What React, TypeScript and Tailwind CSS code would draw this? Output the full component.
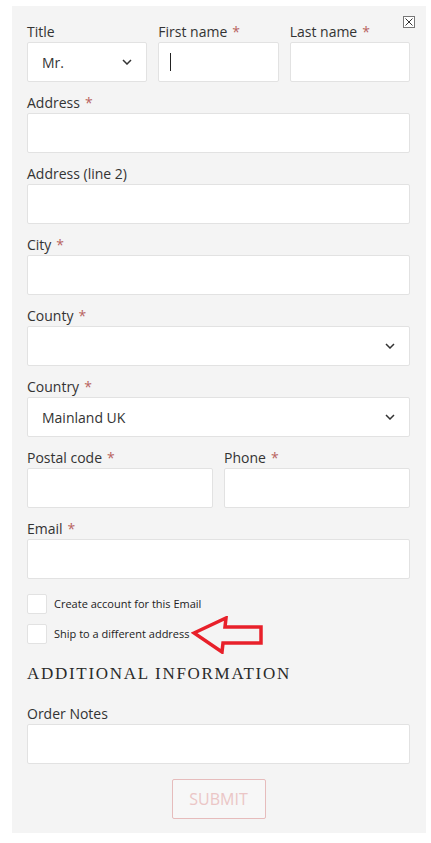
import React from 'react';

type FieldProps = {
  label: string;
  required?: boolean;
  select?: boolean;
  value?: string;
  caret?: boolean;
  className?: string;
};

const Chevron = () => (
  <svg width="10" height="6" viewBox="0 0 10 6" className="shrink-0">
    <path d="M1 1l4 4 4-4" fill="none" stroke="#333" strokeWidth="1.5" />
  </svg>
);

const Field: React.FC<FieldProps> = ({ label, required, select, value, caret, className = '' }) => (
  <div className={`flex flex-col mb-[10px] ${className}`}>
    <div className="h-[21px] leading-[22px] text-[14px] text-[#333]">
      {label}
      {required && <span className="text-[#b8635f] ml-[5px]">*</span>}
    </div>
    <div className="h-10 bg-white border border-[#e2e2e2] rounded-[2px] flex items-center pl-[14px] pr-[14px]">
      {caret && <span className="block w-px h-[18px] bg-[#222] -ml-[3px]" />}
      <span className="flex-1 text-[14px] text-[#333]">{value}</span>
      {select && <Chevron />}
    </div>
  </div>
);

const Check: React.FC<{ label: string }> = ({ label }) => (
  <div className="flex items-center h-5">
    <div className="w-5 h-5 bg-white border border-[#e2e2e2] rounded-[2px]" />
    <span className="ml-[7px] text-[11px] text-[#222]">{label}</span>
  </div>
);

export default function App() {
  return (
    <div className="bg-white min-h-[843px] pt-[6px] pl-[12px]" style={{ fontFamily: '"Open Sans", sans-serif' }}>
      <div className="relative w-[414px] h-[827px] bg-[#f4f4f4] pt-[15px] pl-[15px] pr-[16px]">
        <div className="absolute top-[10px] right-[11px] w-[12px] h-[12px] border border-[#777] flex items-center justify-center bg-white">
          <svg width="8" height="8" viewBox="0 0 8 8">
            <path d="M0.5 0.5l7 7M7.5 0.5l-7 7" stroke="#333" strokeWidth="1" />
          </svg>
        </div>

        <div className="grid grid-cols-3 gap-x-[11px]">
          <Field label="Title" select value="Mr." />
          <Field label="First name" required caret />
          <Field label="Last name" required />
        </div>
        <Field label="Address" required />
        <Field label="Address (line 2)" />
        <Field label="City" required />
        <Field label="County" required select />
        <Field label="Country" required select value="Mainland UK" />
        <div className="grid grid-cols-2 gap-x-[11px]">
          <Field label="Postal code" required />
          <Field label="Phone" required />
        </div>
        <Field label="Email" required />

        <div className="mt-[15px] flex flex-col gap-[10px]">
          <Check label="Create account for this Email" />
          <div className="relative">
            <Check label="Ship to a different address" />
            <svg className="absolute left-[164px] -top-[8px]" width="76" height="38" viewBox="0 0 76 38">
              <path d="M3 17 L35 2 L34 11 L70 11 L70 27 L32 27 L31 36 Z" fill="none" stroke="#e8202a" strokeWidth="3.5" strokeLinejoin="miter" />
            </svg>
          </div>
        </div>

        <div
          className="mt-[19px] h-[22px] leading-[22px] text-[17px] tracking-[1.7px] text-[#2a2a2a]"
          style={{ fontFamily: '"Liberation Serif", serif' }}
        >
          ADDITIONAL INFORMATION
        </div>

        <div className="mt-[18px]">
          <Field label="Order Notes" className="mb-0" />
        </div>

        <div className="flex justify-center mt-[15px]">
          <button className="w-[94px] h-10 border border-[#e6bcbc] rounded-[2px] bg-[#f7f7f7] text-[16px] text-[#ebc6c6]">
            SUBMIT
          </button>
        </div>
      </div>
    </div>
  );
}
